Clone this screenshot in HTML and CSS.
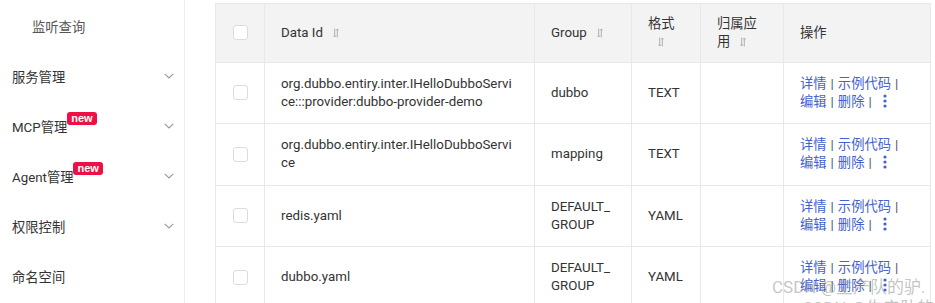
FILE: index.html
```html
<!DOCTYPE html>
<html lang="zh">
<head>
<meta charset="utf-8">
<link rel="stylesheet" href="styles.css">
</head>
<body>
<div class="layout">
  <aside class="sidebar">
    <div class="nav-sub">监听查询</div>
    <div class="nav-item"><span class="nav-label">服务管理</span><svg class="chev" viewBox="0 0 10 6"><path d="M0.7 0.8 L5 5 L9.3 0.8"/></svg></div>
    <div class="nav-item"><span class="nav-label">MCP管理<span class="badge">new</span></span><svg class="chev" viewBox="0 0 10 6"><path d="M0.7 0.8 L5 5 L9.3 0.8"/></svg></div>
    <div class="nav-item"><span class="nav-label">Agent管理<span class="badge">new</span></span><svg class="chev" viewBox="0 0 10 6"><path d="M0.7 0.8 L5 5 L9.3 0.8"/></svg></div>
    <div class="nav-item"><span class="nav-label">权限控制</span><svg class="chev" viewBox="0 0 10 6"><path d="M0.7 0.8 L5 5 L9.3 0.8"/></svg></div>
    <div class="nav-item"><span class="nav-label">命名空间</span></div>
  </aside>
  <main class="main">
    <table class="grid">
      <colgroup>
        <col class="c-check"><col class="c-id"><col class="c-group"><col class="c-fmt"><col class="c-app"><col class="c-ops">
      </colgroup>
      <thead>
        <tr>
          <th><span class="cb"></span></th>
          <th>Data Id<svg class="sort" viewBox="0 0 6 10"><path d="M1.7 0.5 V9 M0.5 7.6 L1.7 9 L2.9 7.6 M4.3 9.5 V1 M3.1 2.4 L4.3 1 L5.5 2.4"/></svg></th>
          <th>Group<svg class="sort" viewBox="0 0 6 10"><path d="M1.7 0.5 V9 M0.5 7.6 L1.7 9 L2.9 7.6 M4.3 9.5 V1 M3.1 2.4 L4.3 1 L5.5 2.4"/></svg></th>
          <th>格式<svg class="sort" viewBox="0 0 6 10"><path d="M1.7 0.5 V9 M0.5 7.6 L1.7 9 L2.9 7.6 M4.3 9.5 V1 M3.1 2.4 L4.3 1 L5.5 2.4"/></svg></th>
          <th>归属应用<svg class="sort" viewBox="0 0 6 10"><path d="M1.7 0.5 V9 M0.5 7.6 L1.7 9 L2.9 7.6 M4.3 9.5 V1 M3.1 2.4 L4.3 1 L5.5 2.4"/></svg></th>
          <th>操作</th>
        </tr>
      </thead>
      <tbody>
        <tr>
          <td><span class="cb"></span></td>
          <td class="id">org.dubbo.entiry.inter.IHelloDubboService:::provider:dubbo-provider-demo</td>
          <td class="id">dubbo</td>
          <td>TEXT</td>
          <td></td>
          <td class="ops"><a>详情</a><span class="sep">|</span><a>示例代码</a><span class="sep">|</span> <a>编辑</a><span class="sep">|</span><a>删除</a><span class="sep">|</span><svg class="more" viewBox="0 0 4 14"><circle cx="2" cy="2" r="1.6"/><circle cx="2" cy="7" r="1.6"/><circle cx="2" cy="12" r="1.6"/></svg></td>
        </tr>
        <tr>
          <td><span class="cb"></span></td>
          <td class="id">org.dubbo.entiry.inter.IHelloDubboService</td>
          <td class="id">mapping</td>
          <td>TEXT</td>
          <td></td>
          <td class="ops"><a>详情</a><span class="sep">|</span><a>示例代码</a><span class="sep">|</span> <a>编辑</a><span class="sep">|</span><a>删除</a><span class="sep">|</span><svg class="more" viewBox="0 0 4 14"><circle cx="2" cy="2" r="1.6"/><circle cx="2" cy="7" r="1.6"/><circle cx="2" cy="12" r="1.6"/></svg></td>
        </tr>
        <tr>
          <td><span class="cb"></span></td>
          <td class="id">redis.yaml</td>
          <td class="id">DEFAULT_GROUP</td>
          <td>YAML</td>
          <td></td>
          <td class="ops"><a>详情</a><span class="sep">|</span><a>示例代码</a><span class="sep">|</span> <a>编辑</a><span class="sep">|</span><a>删除</a><span class="sep">|</span><svg class="more" viewBox="0 0 4 14"><circle cx="2" cy="2" r="1.6"/><circle cx="2" cy="7" r="1.6"/><circle cx="2" cy="12" r="1.6"/></svg></td>
        </tr>
        <tr>
          <td><span class="cb"></span></td>
          <td class="id">dubbo.yaml</td>
          <td class="id">DEFAULT_GROUP</td>
          <td>YAML</td>
          <td></td>
          <td class="ops"><a>详情</a><span class="sep">|</span><a>示例代码</a><span class="sep">|</span> <a>编辑</a><span class="sep">|</span><a>删除</a><span class="sep">|</span><svg class="more" viewBox="0 0 4 14"><circle cx="2" cy="2" r="1.6"/><circle cx="2" cy="7" r="1.6"/><circle cx="2" cy="12" r="1.6"/></svg></td>
        </tr>
      </tbody>
    </table>
  </main>
</div>
<div class="watermark">
  <div class="wm1">CSDN @生产队的驴.</div>
  <div class="wm2">CSDN @生产队的驴</div>
</div>
</body>
</html>
```
FILE: styles.css
```css
html, body {
  margin: 0;
  padding: 0;
  background: #fff;
  overflow: hidden;
}
body {
  font-family: Roboto, "Noto Sans CJK SC", sans-serif;
  font-size: 13.3px;
  color: #333;
  width: 935px;
  height: 303px;
  position: relative;
}
.layout {
  display: flex;
  height: 303px;
  overflow: hidden;
}
.sidebar {
  width: 185px;
  flex: none;
  border-right: 1px solid #eee;
  padding-top: 1px;
  box-sizing: border-box;
}
.nav-sub {
  height: 50px;
  display: flex;
  align-items: center;
  padding-left: 32px;
  color: #555;
}
.nav-item {
  height: 50px;
  display: flex;
  align-items: center;
  justify-content: space-between;
  padding-left: 12px;
  padding-right: 10px;
  color: #333;
}
.nav-label {
  position: relative;
}
.badge {
  position: absolute;
  left: 100%;
  top: -5px;
  background: #ee0f45;
  color: #fff;
  font-family: "Liberation Sans", Arial, sans-serif;
  font-weight: bold;
  font-size: 11px;
  line-height: 13px;
  height: 13px;
  padding: 0 4px;
  border-radius: 3px;
}
.chev {
  width: 10px;
  height: 6px;
  fill: none;
  stroke: #999;
  stroke-width: 1.1;
}
.main {
  flex: 1;
  padding-left: 30px;
  padding-top: 3px;
}
.grid {
  border-collapse: collapse;
  table-layout: fixed;
  width: 715px;
}
.c-check { width: 49px; }
.c-id { width: 270px; }
.c-group { width: 97px; }
.c-fmt { width: 69px; }
.c-app { width: 83px; }
.c-ops { width: 147px; }
.grid th, .grid td {
  border: 1px solid #e8e8e8;
  padding: 0 16px;
  text-align: left;
  vertical-align: middle;
  line-height: 18px;
  font-weight: normal;
}
.grid th {
  background: #f3f3f3;
  height: 57.5px;
  color: #333;
}
.grid td {
  height: 60.5px;
}
.grid td.id {
  word-break: break-all;
}
.grid th:first-child, .grid td:first-child {
  padding: 0 0 0 17px;
}
.cb {
  display: block;
  width: 13px;
  height: 13px;
  border: 1px solid #dcdcdc;
  border-radius: 3px;
  background: #fff;
}
.sort {
  width: 6px;
  height: 10px;
  margin-left: 10px;
  fill: none;
  stroke: #a8a8a8;
  stroke-width: 0.9;
  vertical-align: -1px;
}
.ops a {
  color: #4361d0;
}
.sep {
  color: #4a5470;
  margin: 0 4px;
}
.more {
  width: 4px;
  height: 14px;
  fill: #4361d0;
  margin-left: 7px;
  vertical-align: -2px;
}
.watermark {
  position: absolute;
  left: 772px;
  top: 277px;
  color: rgba(140, 140, 140, 0.5);
  font-family: Roboto, "Noto Sans CJK SC", sans-serif;
  font-size: 17px;
  line-height: 21px;
  white-space: nowrap;
  pointer-events: none;
}
.wm2 {
  padding-left: 30px;
}
```
